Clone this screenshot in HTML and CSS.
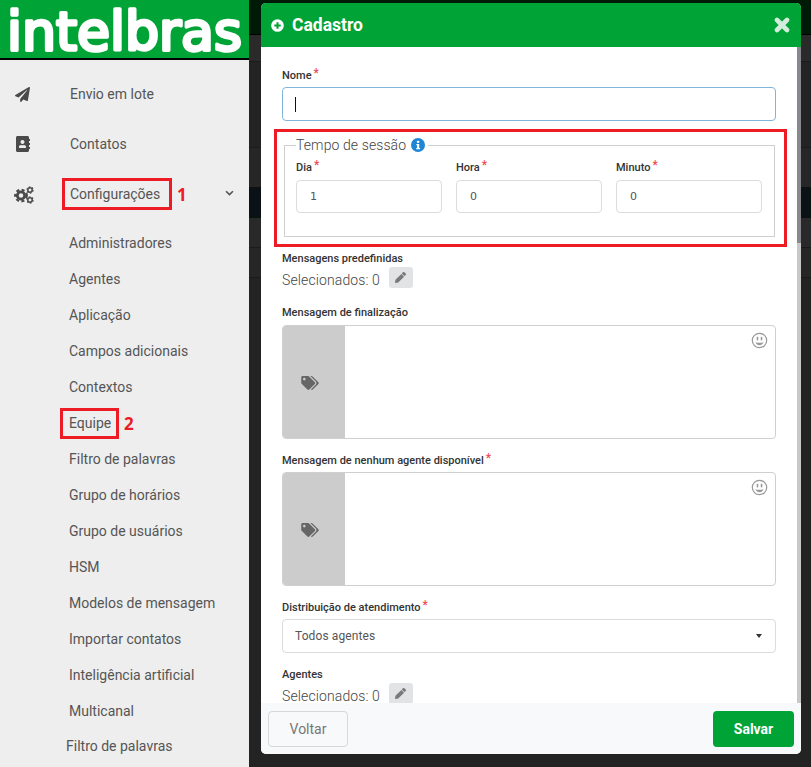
FILE: index.html
```html
<!DOCTYPE html>
<html lang="pt-BR">
<head>
<meta charset="utf-8">
<title>Cadastro</title>
<link rel="stylesheet" href="styles.css">
</head>
<body>
<svg class="defs" width="0" height="0" aria-hidden="true">
  <symbol id="i-pencil" viewBox="0 0 512 512"><path d="M497.9 142.1l-46.1 46.1c-4.7 4.7-12.3 4.7-17 0l-111-111c-4.7-4.7-4.7-12.3 0-17l46.1-46.1c18.7-18.7 49.1-18.7 67.9 0l60.1 60.1c18.8 18.7 18.8 49.1 0 67.9zM284.2 99.8L21.6 362.4.4 483.9c-2.9 16.4 11.4 30.6 27.8 27.8l121.5-21.3 262.6-262.6c4.7-4.7 4.7-12.3 0-17l-111-111c-4.8-4.7-12.4-4.7-17.1 0z"/></symbol>
  <symbol id="i-tags" viewBox="0 0 640 512"><path d="M497.941 225.941L286.059 14.059A48 48 0 0 0 252.118 0H48C21.49 0 0 21.49 0 48v204.118a48 48 0 0 0 14.059 33.941l211.882 211.882c18.744 18.745 49.136 18.746 67.882 0l204.118-204.118c18.745-18.745 18.745-49.137 0-67.882zM112 160c-26.51 0-48-21.49-48-48s21.49-48 48-48 48 21.49 48 48-21.49 48-48 48zm513.941 133.823L421.823 497.941c-18.745 18.745-49.137 18.745-67.882 0l-.36-.36L527.64 323.522c16.999-16.999 26.36-39.6 26.36-63.64s-9.362-46.641-26.36-63.64L331.397 0h48.721a48 48 0 0 1 33.941 14.059l211.882 211.882c18.745 18.745 18.745 49.137 0 67.882z"/></symbol>
  <symbol id="i-smile" viewBox="0 0 18 18"><circle cx="9" cy="9" r="7.6" fill="none" stroke="currentColor" stroke-width="1.3"/><rect x="6" y="5" width="1.7" height="4" rx=".8"/><rect x="10.3" y="5" width="1.7" height="4" rx=".8"/><path d="M4.6 10.8c1 2.2 2.6 3.1 4.4 3.1s3.4-.9 4.4-3.1c-2.8.9-6 .9-8.800 0z"/></symbol>
</svg>

<aside class="sidebar">
  <div class="brand">
    <svg class="brand-mark" viewBox="0 0 249 58" role="img" aria-label="intelbras"><text class="brand-text" x="7" y="50" textLength="235" lengthAdjust="spacingAndGlyphs">intelbras</text></svg>
  </div>
  <nav class="nav">
    <a class="nav-item">
      <svg class="nav-icon icon-plane" viewBox="0 0 512 512"><path d="M476 3.2L12.5 270.6c-18.1 10.4-15.800 35.6 2.200 43.200L121 358.400l287.300-253.200c5.500-4.900 13.300 2.600 8.600 8.300L176 407v80.500c0 23.600 28.500 32.900 42.500 15.800L282 426l124.600 52.200c14.200 6 30.400-2.900 33-18.200l72-432C515 7.800 493.300-6.800 476 3.200z"/></svg>
      <span>Envio em lote</span>
    </a>
    <a class="nav-item">
      <svg class="nav-icon icon-book" viewBox="0 0 448 512"><path d="M436 160c6.600 0 12-5.400 12-12v-40c0-6.600-5.400-12-12-12h-20V48c0-26.500-21.500-48-48-48H48C21.500 0 0 21.500 0 48v416c0 26.500 21.500 48 48 48h320c26.500 0 48-21.500 48-48v-48h20c6.600 0 12-5.400 12-12v-40c0-6.600-5.400-12-12-12h-20v-64h20c6.600 0 12-5.400 12-12v-40c0-6.600-5.400-12-12-12h-20v-64h20zm-228-32c35.300 0 64 28.700 64 64s-28.700 64-64 64-64-28.700-64-64 28.700-64 64-64zm112 236.800c0 10.600-10 19.200-22.400 19.200H118.400C106 384 96 375.400 96 364.800v-19.200c0-31.800 30.100-57.600 67.200-57.600h5c12.300 5.100 25.700 8 39.800 8s27.600-2.900 39.800-8h5c37.100 0 67.200 25.800 67.200 57.600v19.200z"/></svg>
      <span>Contatos</span>
    </a>
    <a class="nav-item">
      <svg class="nav-icon icon-cogs" viewBox="0 0 20 18">
        <circle class="cog-teeth" cx="7" cy="9.500" r="5.800"/>
        <circle class="cog-ring" cx="7" cy="9.500" r="3.700"/>
        <circle class="cog-small-teeth" cx="16" cy="4" r="3.100"/>
        <circle class="cog-small-ring" cx="16" cy="4" r="2.200"/>
        <circle class="cog-small-teeth" cx="16" cy="14" r="3.100"/>
        <circle class="cog-small-ring" cx="16" cy="14" r="2.200"/>
      </svg>
      <span>Configurações</span>
      <svg class="chevron" viewBox="0 0 10 6"><path d="M1.200 1l3.800 3.800L8.800 1"/></svg>
    </a>
    <ul class="subnav">
      <li>Administradores</li>
      <li>Agentes</li>
      <li>Aplicação</li>
      <li>Campos adicionais</li>
      <li>Contextos</li>
      <li>Equipe</li>
      <li>Filtro de palavras</li>
      <li>Grupo de horários</li>
      <li>Grupo de usuários</li>
      <li>HSM</li>
      <li>Modelos de mensagem</li>
      <li>Importar contatos</li>
      <li>Inteligência artificial</li>
      <li>Multicanal</li>
      <li class="subnav-last">Filtro de palavras</li>
    </ul>
  </nav>
</aside>

<main class="backdrop">
  <div class="strip strip-top"></div>
  <div class="strip strip-a"></div>
  <div class="strip strip-b"></div>
  <div class="strip strip-c"></div>
  <div class="strip strip-dark"></div>
  <div class="strip strip-d"></div>
  <div class="strip strip-e"></div>
  <div class="strip strip-f"></div>
</main>

<section class="modal">
  <header class="modal-head">
    <h1 class="modal-title">
      <svg class="title-icon" viewBox="0 0 14 14"><circle cx="7" cy="7" r="6.800" fill="#fff"/><path d="M7 3.500v7M3.500 7h7" stroke="#00a335" stroke-width="2.200"/></svg>
      Cadastro
    </h1>
    <svg class="close-icon" viewBox="0 0 16 16"><path d="M3 3l10 10M13 3L3 13"/></svg>
  </header>

  <div class="modal-body">
    <label class="label">Nome<i class="req">*</i></label>
    <div class="control control-focus"><span class="caret"></span></div>

    <fieldset class="group">
      <legend class="group-legend">Tempo de sessão
        <svg class="info-icon" viewBox="0 0 14 14"><circle cx="7" cy="7" r="7" fill="#1f86d6"/><rect x="6" y="2.700" width="2.200" height="2.200" rx=".6" fill="#fff"/><path d="M5.400 6h2.800v4h.9v1.200H5.200V10h.9V7.200h-.7z" fill="#fff"/></svg>
      </legend>
      <div class="group-grid">
        <div>
          <label class="label">Dia<i class="req">*</i></label>
          <input class="control control-num" type="text" value="1">
        </div>
        <div>
          <label class="label">Hora<i class="req">*</i></label>
          <input class="control control-num" type="text" value="0">
        </div>
        <div>
          <label class="label">Minuto<i class="req">*</i></label>
          <input class="control control-num" type="text" value="0">
        </div>
      </div>
    </fieldset>

    <label class="label label-tight">Mensagens predefinidas</label>
    <div class="picker">
      <span class="picker-text">Selecionados: 0</span>
      <button class="picker-btn" type="button"><svg class="pencil"><use href="#i-pencil"/></svg></button>
    </div>

    <label class="label label-msg">Mensagem de finalização</label>
    <div class="editor">
      <div class="editor-side"><svg class="tags"><use href="#i-tags"/></svg></div>
      <div class="editor-area"><svg class="smile"><use href="#i-smile"/></svg></div>
    </div>

    <label class="label label-next">Mensagem de nenhum agente disponível<i class="req">*</i></label>
    <div class="editor">
      <div class="editor-side"><svg class="tags"><use href="#i-tags"/></svg></div>
      <div class="editor-area"><svg class="smile"><use href="#i-smile"/></svg></div>
    </div>

    <label class="label label-next">Distribuição de atendimento<i class="req">*</i></label>
    <div class="select">
      <span>Todos agentes</span>
      <span class="select-caret"></span>
    </div>

    <label class="label label-agents">Agentes</label>
    <div class="picker">
      <span class="picker-text">Selecionados: 0</span>
      <button class="picker-btn" type="button"><svg class="pencil"><use href="#i-pencil"/></svg></button>
    </div>
  </div>

  <footer class="modal-foot">
    <button class="btn btn-back" type="button">Voltar</button>
    <button class="btn btn-save" type="button">Salvar</button>
  </footer>

  <div class="scrollbar"><div class="scrollbar-thumb"></div></div>
</section>

<div class="mark mark-config"></div>
<span class="mark-num mark-num-1">1</span>
<div class="mark mark-team"></div>
<span class="mark-num mark-num-2">2</span>
<div class="mark mark-session"></div>
</body>
</html>
```

FILE: styles.css
```css
* { box-sizing: border-box; }

html, body {
  margin: 0;
  height: 767px;
  overflow: hidden;
}

body {
  display: flex;
  position: relative;
  background: #232323;
  font-family: Roboto, "Liberation Sans", sans-serif;
  color: #555;
}

.defs { position: absolute; }

/* Sidebar */
.sidebar {
  flex: 0 0 249px;
  height: 767px;
  background: #eeeeee;
  overflow: hidden;
}

.brand {
  height: 60px;
  background: #00a335;
  border-bottom: 2px solid #000;
}

.brand-mark { display: block; width: 249px; height: 58px; overflow: visible; }

.brand-text {
  font-family: "DejaVu Sans", sans-serif;
  font-weight: 400;
  font-size: 54px;
  fill: #fff;
  stroke: #fff;
  stroke-width: 3.500px;
  stroke-linejoin: round;
}

.nav { padding-top: 9px; }

.nav-item {
  display: flex;
  align-items: center;
  height: 50px;
  font-size: 14px;
  padding-left: 70px;
  position: relative;
  color: #555;
}

.nav-icon {
  position: absolute;
  fill: #4a4a4a;
}

.icon-plane { left: 15px; top: 18px; width: 15px; height: 15px; }
.icon-book { left: 16px; top: 17px; width: 14px; height: 16px; }
.icon-cogs { left: 14px; top: 17px; width: 20px; height: 18px; }

.cog-teeth { fill: none; stroke: #4a4a4a; stroke-width: 2.200; stroke-dasharray: 3 2.460; }
.cog-ring { fill: none; stroke: #4a4a4a; stroke-width: 2.800; }
.cog-small-teeth { fill: none; stroke: #4a4a4a; stroke-width: 1.100; stroke-dasharray: 1.700 1.550; }
.cog-small-ring { fill: none; stroke: #4a4a4a; stroke-width: 1.500; }

.chevron {
  position: absolute;
  left: 225px;
  top: 21px;
  width: 9px;
  height: 6px;
  fill: none;
  stroke: #555;
  stroke-width: 1.800;
}

.subnav {
  list-style: none;
  margin: 0;
  padding: 6px 0 0 69px;
  font-size: 14px;
}

.subnav li {
  height: 36px;
  line-height: 36px;
  white-space: nowrap;
}

.subnav-last { margin-left: -3px; margin-top: -1px; }

/* Dimmed page */
.backdrop { flex: 1; height: 767px; }

.strip { border-bottom: 1px solid #1b1b1b; }
.strip-top { height: 35px; background: #001a08; border-bottom-color: #000; }
.strip-a { height: 27px; background: #2a2a2a; }
.strip-b { height: 86px; background: #232323; }
.strip-c { height: 39px; background: #262626; border-bottom: 0; }
.strip-dark { height: 31px; background: #0b1216; border-bottom: 0; }
.strip-d { height: 30px; background: #292929; }
.strip-e { height: 30px; background: #262626; }
.strip-f { height: 489px; background: #232323; border-bottom: 0; }

/* Modal */
.modal {
  position: absolute;
  left: 261px;
  top: 3px;
  width: 540px;
  height: 751px;
  display: flex;
  flex-direction: column;
  background: #fff;
  border-radius: 5px;
  overflow: hidden;
}

.modal-head {
  flex: 0 0 44px;
  display: flex;
  align-items: center;
  justify-content: space-between;
  background: #00a335;
  padding: 0 10px;
}

.modal-title {
  display: flex;
  align-items: center;
  gap: 8px;
  margin: 0;
  font-size: 17.500px;
  font-weight: 700;
  color: #fff;
}

.title-icon { width: 13px; height: 13px; margin-top: 1px; }

.close-icon {
  width: 16px;
  height: 16px;
  margin-right: 1px;
  fill: none;
  stroke: #d4ecdb;
  stroke-width: 4.600;
  stroke-linecap: round;
}

.modal-body {
  flex: 1;
  min-height: 0;
  overflow: hidden;
  padding: 21px 25px 0 21px;
}

.label {
  display: block;
  height: 14px;
  font-size: 11px;
  line-height: 14px;
  font-weight: 500;
  color: #333;
  white-space: nowrap;
}

.req {
  color: #ee4a54;
  font-style: normal;
  font-size: 12px;
  line-height: 10px;
  margin-left: 2px;
  vertical-align: 2px;
}

.control {
  display: block;
  width: 100%;
  border: 1px solid #dcdcdc;
  border-radius: 4px;
  background: #fff;
  outline: 0;
}

.control-focus {
  position: relative;
  height: 34px;
  margin-top: 5px;
  border-color: #80b5da;
}

.caret {
  position: absolute;
  left: 12px;
  top: 9px;
  width: 1px;
  height: 15px;
  background: #111;
}

.control-num {
  height: 33px;
  margin-top: 6px;
  padding: 0 13px;
  font-family: "DejaVu Sans", sans-serif;
  font-size: 11px;
  color: #555;
}

.group {
  margin: 15px 2px 0;
  padding: 6px 11px 23px;
  width: 491px;
  border: 1px solid #cfcfcf;
}

.group-legend {
  display: flex;
  align-items: center;
  gap: 5px;
  height: 18px;
  padding: 0 3px 0 0;
  font-size: 14px;
  font-weight: 300;
  letter-spacing: .1px;
  color: #444;
}

.info-icon { width: 14px; height: 14px; }

.group-grid {
  display: grid;
  grid-template-columns: repeat(3, 146px);
  column-gap: 14px;
}

.label-tight { margin-top: 15px; }
.label-msg { margin-top: 18px; }
.label-next { margin-top: 14px; }
.label-agents { margin-top: 15px; }

.picker {
  display: flex;
  align-items: flex-end;
  gap: 9px;
  margin-top: 1px;
}

.picker-text {
  font-size: 14px;
  font-weight: 300;
  line-height: 16px;
  letter-spacing: .12px;
  color: #444;
}

.picker-btn {
  display: flex;
  align-items: center;
  justify-content: center;
  width: 24px;
  height: 21px;
  padding: 0;
  border: 0;
  border-radius: 3px;
  background: #e2e3e5;
}

.pencil { width: 11px; height: 11px; fill: #7a7a7a; }

.editor {
  display: flex;
  height: 114px;
  margin-top: 5px;
  border: 1px solid #cfcfcf;
  border-radius: 4px;
  overflow: hidden;
}

.editor-side {
  flex: 0 0 62px;
  display: flex;
  align-items: center;
  justify-content: center;
  padding-top: 1px;
  background: #cccccc;
}

.tags { width: 18px; height: 14px; fill: #666; margin-right: 9px; }

.editor-area {
  flex: 1;
  display: flex;
  justify-content: flex-end;
  padding: 6px 7px;
}

.smile { width: 17px; height: 17px; fill: #999; color: #999; }

.select {
  display: flex;
  align-items: center;
  justify-content: space-between;
  height: 34px;
  margin-top: 5px;
  padding: 0 13px 0 12px;
  border: 1px solid #dcdcdc;
  border-radius: 4px;
  font-size: 12px;
  letter-spacing: .1px;
  color: #555;
}

.select-caret {
  width: 0;
  height: 0;
  border-left: 3.500px solid transparent;
  border-right: 3.500px solid transparent;
  border-top: 4px solid #333;
}

.modal-foot {
  flex: 0 0 51px;
  display: flex;
  justify-content: space-between;
  align-items: flex-start;
  padding: 8px 7px 0;
  background: #f8f9fa;
}

.btn {
  height: 36px;
  border-radius: 4px;
  font-family: Roboto, "Liberation Sans", sans-serif;
  font-size: 14px;
}

.btn-back {
  width: 80px;
  border: 1px solid #d8d8d8;
  background: #f8f9fa;
  color: #777;
}

.btn-save {
  width: 81px;
  border: 0;
  background: #00a335;
  color: #fff;
  font-weight: 700;
}

.scrollbar {
  position: absolute;
  right: 0;
  top: 44px;
  width: 4px;
  height: 656px;
  background: #c8c8c8;
}

.scrollbar-thumb { height: 196px; background: #88888e; }

/* Red annotations */
.mark {
  position: absolute;
  border: 3px solid #ed1c24;
}

.mark-config { left: 62px; top: 178px; width: 110px; height: 32px; }
.mark-team { left: 60px; top: 408px; width: 59px; height: 31px; }
.mark-session { left: 274px; top: 129px; width: 513px; height: 118px; }

.mark-num {
  position: absolute;
  font-family: "Noto Sans", sans-serif;
  font-size: 17px;
  line-height: 20px;
  font-weight: 700;
  color: #ed1c24;
}

.mark-num-1 { left: 177px; top: 185px; }
.mark-num-2 { left: 124px; top: 414px; }
```
